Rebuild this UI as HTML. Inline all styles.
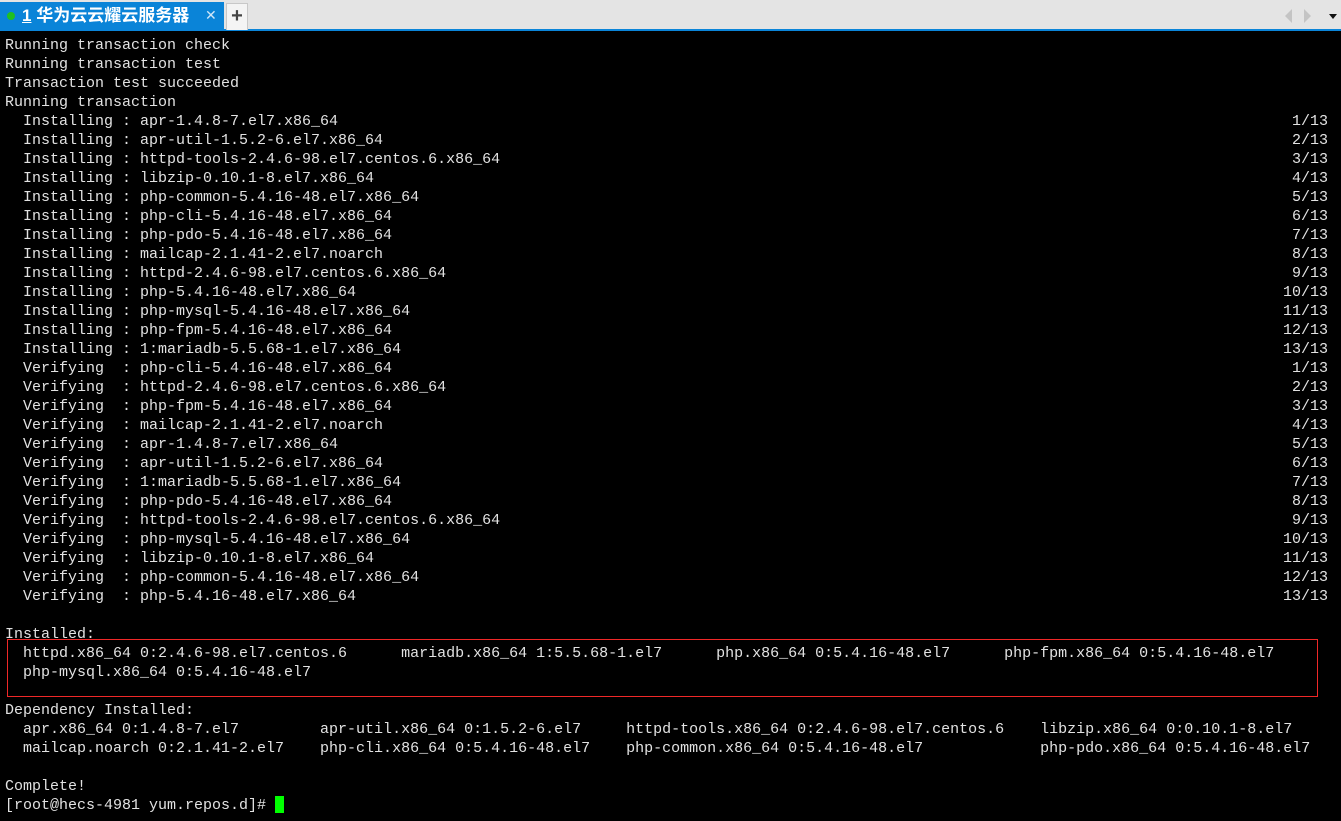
<!DOCTYPE html>
<html><head><meta charset="utf-8"><style>
html,body{margin:0;padding:0;width:1341px;height:821px;overflow:hidden;background:#000}
.bar{position:absolute;left:0;top:0;width:1341px;height:29px;background:#e4e4e4}
.line{position:absolute;left:0;top:29px;width:1341px;height:2px;background:#0a84d8}
.tab{position:absolute;left:0;top:2px;width:224px;height:27px;background:#0a84d8;color:#fff;font:bold 17px "Liberation Sans","Noto Sans CJK SC",sans-serif;line-height:27px}
.dot{position:absolute;left:7px;top:10px;width:8px;height:8px;border-radius:50%;background:#20c020}
.plus{position:absolute;left:226px;top:3px;width:20px;height:26px;background:#f4f4f4;border:1px solid #c8c8c8;border-bottom:none;font:bold 20px "Liberation Sans",sans-serif;color:#444;text-align:center;line-height:24px}
pre{margin:0;position:absolute;font:15px/19px "Liberation Mono",monospace;color:#e2e2e2}
.box{position:absolute;left:7px;top:639px;width:1309px;height:56px;border:1px solid #f02828}
.cur{position:absolute;left:275px;top:796px;width:9px;height:17px;background:#00ff00}
</style></head><body>
<div class="bar"></div><div class="line"></div>
<div class="tab"><div class="dot"></div><span style="position:absolute;left:22px"><u>1</u> 华为云云耀云服务器</span><span style="position:absolute;left:205px;font-weight:normal;color:#cfe6f8;font-size:14px">✕</span></div>
<div class="plus">+</div>
<svg style="position:absolute;left:1280px;top:6px" width="60" height="20"><polygon points="12,3 5,10 12,17" fill="#c4c4c4"/><polygon points="24,3 31,10 24,17" fill="#c4c4c4"/><polygon points="49,8 57,8 53,13" fill="#111"/></svg>
<pre style="left:5px;top:36px">Running transaction check
Running transaction test
Transaction test succeeded
Running transaction
  Installing : apr-1.4.8-7.el7.x86_64
  Installing : apr-util-1.5.2-6.el7.x86_64
  Installing : httpd-tools-2.4.6-98.el7.centos.6.x86_64
  Installing : libzip-0.10.1-8.el7.x86_64
  Installing : php-common-5.4.16-48.el7.x86_64
  Installing : php-cli-5.4.16-48.el7.x86_64
  Installing : php-pdo-5.4.16-48.el7.x86_64
  Installing : mailcap-2.1.41-2.el7.noarch
  Installing : httpd-2.4.6-98.el7.centos.6.x86_64
  Installing : php-5.4.16-48.el7.x86_64
  Installing : php-mysql-5.4.16-48.el7.x86_64
  Installing : php-fpm-5.4.16-48.el7.x86_64
  Installing : 1:mariadb-5.5.68-1.el7.x86_64
  Verifying  : php-cli-5.4.16-48.el7.x86_64
  Verifying  : httpd-2.4.6-98.el7.centos.6.x86_64
  Verifying  : php-fpm-5.4.16-48.el7.x86_64
  Verifying  : mailcap-2.1.41-2.el7.noarch
  Verifying  : apr-1.4.8-7.el7.x86_64
  Verifying  : apr-util-1.5.2-6.el7.x86_64
  Verifying  : 1:mariadb-5.5.68-1.el7.x86_64
  Verifying  : php-pdo-5.4.16-48.el7.x86_64
  Verifying  : httpd-tools-2.4.6-98.el7.centos.6.x86_64
  Verifying  : php-mysql-5.4.16-48.el7.x86_64
  Verifying  : libzip-0.10.1-8.el7.x86_64
  Verifying  : php-common-5.4.16-48.el7.x86_64
  Verifying  : php-5.4.16-48.el7.x86_64

Installed:
  httpd.x86_64 0:2.4.6-98.el7.centos.6      mariadb.x86_64 1:5.5.68-1.el7      php.x86_64 0:5.4.16-48.el7      php-fpm.x86_64 0:5.4.16-48.el7
  php-mysql.x86_64 0:5.4.16-48.el7

Dependency Installed:
  apr.x86_64 0:1.4.8-7.el7         apr-util.x86_64 0:1.5.2-6.el7     httpd-tools.x86_64 0:2.4.6-98.el7.centos.6    libzip.x86_64 0:0.10.1-8.el7
  mailcap.noarch 0:2.1.41-2.el7    php-cli.x86_64 0:5.4.16-48.el7    php-common.x86_64 0:5.4.16-48.el7             php-pdo.x86_64 0:5.4.16-48.el7

Complete!
[root@hecs-4981 yum.repos.d]# </pre>
<pre style="right:13px;top:112px;text-align:right"> 1/13
 2/13
 3/13
 4/13
 5/13
 6/13
 7/13
 8/13
 9/13
10/13
11/13
12/13
13/13
 1/13
 2/13
 3/13
 4/13
 5/13
 6/13
 7/13
 8/13
 9/13
10/13
11/13
12/13
13/13</pre>
<div class="box"></div>
<div class="cur"></div>
</body></html>
